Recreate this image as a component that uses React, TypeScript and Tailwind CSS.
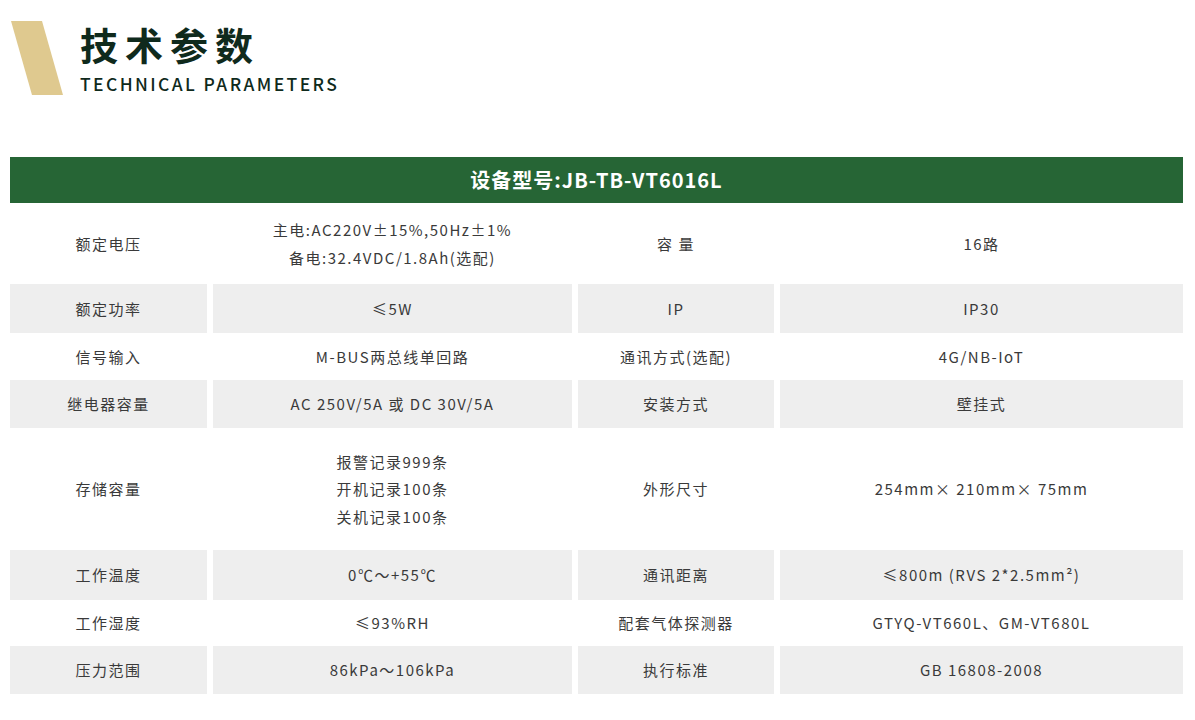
const rows: { h: string; gray: boolean; cells: string[][] }[] = [
  { h: 'h-[81px]', gray: false, cells: [['额定电压'], ['主电:AC220V±15%,50Hz±1%', '备电:32.4VDC/1.8Ah(选配)'], ['容 量'], ['16路']] },
  { h: 'h-[49px]', gray: true, cells: [['额定功率'], ['≤5W'], ['IP'], ['IP30']] },
  { h: 'h-[47px]', gray: false, cells: [['信号输入'], ['M-BUS两总线单回路'], ['通讯方式(选配)'], ['4G/NB-IoT']] },
  { h: 'h-[48px]', gray: true, cells: [['继电器容量'], ['AC 250V/5A 或 DC 30V/5A'], ['安装方式'], ['壁挂式']] },
  { h: 'h-[122px]', gray: false, cells: [['存储容量'], ['报警记录999条', '开机记录100条', '关机记录100条'], ['外形尺寸'], ['254mm× 210mm× 75mm']] },
  { h: 'h-[50px]', gray: true, cells: [['工作温度'], ['0℃～+55℃'], ['通讯距离'], ['≤800m (RVS 2*2.5mm²)']] },
  { h: 'h-[46px]', gray: false, cells: [['工作湿度'], ['≤93%RH'], ['配套气体探测器'], ['GTYQ-VT660L、GM-VT680L']] },
  { h: 'h-[48px]', gray: true, cells: [['压力范围'], ['86kPa～106kPa'], ['执行标准'], ['GB 16808-2008']] },
];

export default function App() {
  return (
    <div className="min-h-[720px] w-[1195px] bg-white font-['Noto_Sans_CJK_SC','Noto_Sans',sans-serif]">
      {/* Heading */}
      <div className="flex items-end gap-[17px] pl-[11px] pt-[21px]">
        <svg width="52" height="74" viewBox="0 0 52 74" className="shrink-0">
          <polygon points="0,0 31,0 52,74 21,74" fill="#dfc98f" />
        </svg>
        <div className="flex flex-col">
          <h1 className="text-[38px] font-bold leading-[44px] tracking-[7px] text-[#0f2a1c]">技术参数</h1>
          <p className="mt-[7px] text-[17.5px] font-medium leading-[22px] tracking-[2.4px] text-[#0f2a1c]">
            TECHNICAL PARAMETERS
          </p>
        </div>
      </div>

      {/* Table */}
      <div className="ml-[10px] mt-[62px] w-[1173px]">
        <div className="flex h-[46px] items-center justify-center bg-[#266535] text-[20px] font-bold tracking-[1px] text-white">
          设备型号:JB-TB-VT6016L
        </div>
        {rows.map((row, i) => (
          <div key={i} className={`grid grid-cols-[197px_359px_196px_403px] gap-x-[6px] ${row.h}`}>
            {row.cells.map((lines, j) => (
              <div
                key={j}
                className={`flex flex-col items-center justify-center text-[15px] leading-[27.5px] tracking-[1.5px] text-[#3a3a3a] ${
                  row.gray ? 'bg-[#eeeeee]' : 'bg-white'
                }`}
              >
                {lines.map((t, k) => (
                  <span key={k}>{t}</span>
                ))}
              </div>
            ))}
          </div>
        ))}
      </div>
    </div>
  );
}
